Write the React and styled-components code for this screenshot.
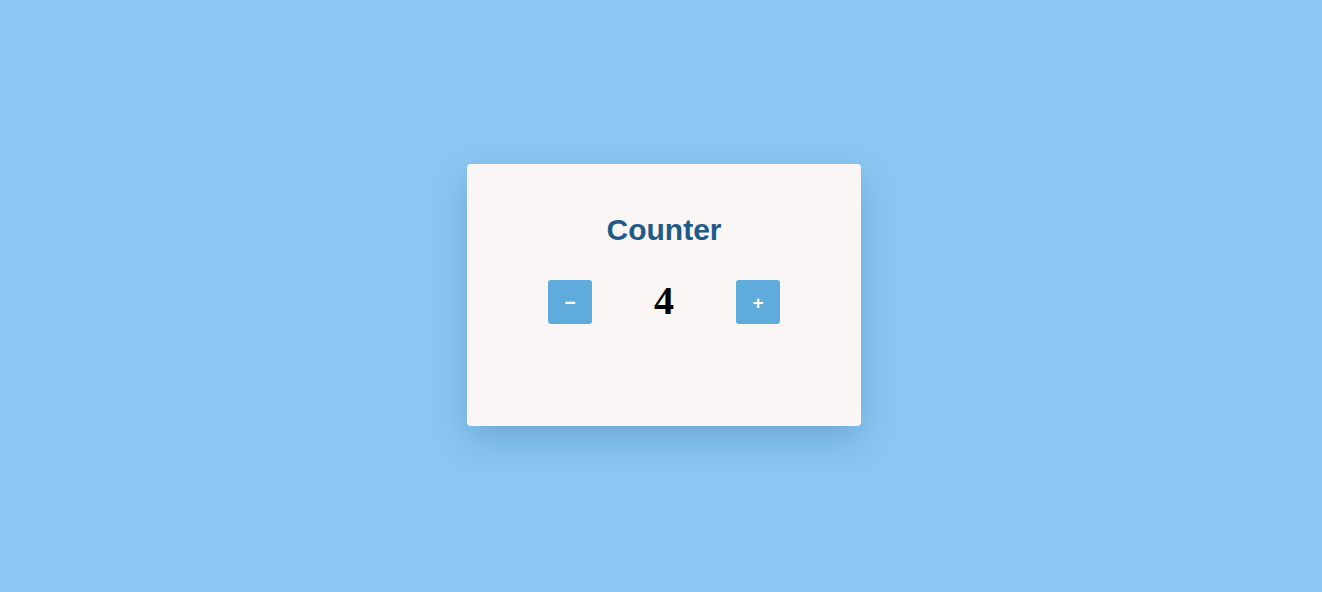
import React, { useState } from 'react';
import styled, { createGlobalStyle } from 'styled-components';

const GlobalStyle = createGlobalStyle`
  html, body {
    margin: 0;
    padding: 0;
    background: #8ac8f3;
  }
`;

const Page = styled.div`
  min-height: 590px;
  padding-left: 6px;
  display: flex;
  align-items: center;
  justify-content: center;
  font-family: "Liberation Sans", Arial, sans-serif;
`;

const Card = styled.div`
  width: 394px;
  box-sizing: border-box;
  padding: 49px 0 102px;
  background: #faf6f6;
  border-radius: 4px;
  box-shadow: 0 14px 36px rgba(20, 60, 110, 0.22);
  display: flex;
  flex-direction: column;
  align-items: center;
  gap: 33px;
`;

const Title = styled.h2`
  margin: 0;
  font-size: 30px;
  line-height: 34px;
  font-weight: 700;
  color: #1f5a89;
`;

const Row = styled.div`
  display: flex;
  align-items: center;
  gap: 62px;
`;

const StepButton = styled.button`
  width: 44px;
  height: 44px;
  padding: 0;
  border: none;
  border-radius: 3px;
  background: #5eabdc;
  color: #fff;
  font-family: "Liberation Sans", Arial, sans-serif;
  font-size: 19px;
  font-weight: 700;
  line-height: 1;
  cursor: pointer;
  display: flex;
  align-items: center;
  justify-content: center;
`;

const Count = styled.span`
  width: 20px;
  text-align: center;
  font-family: "Liberation Serif", "Times New Roman", serif;
  font-weight: 700;
  font-size: 40px;
  line-height: 1;
  margin-bottom: 3px;
  color: #000;
`;

export default function App() {
  const [count, setCount] = useState(4);

  return (
    <>
      <GlobalStyle />
      <Page>
        <Card>
          <Title>Counter</Title>
          <Row>
            <StepButton onClick={() => setCount(count - 1)}>−</StepButton>
            <Count>{count}</Count>
            <StepButton onClick={() => setCount(count + 1)}>+</StepButton>
          </Row>
        </Card>
      </Page>
    </>
  );
}
